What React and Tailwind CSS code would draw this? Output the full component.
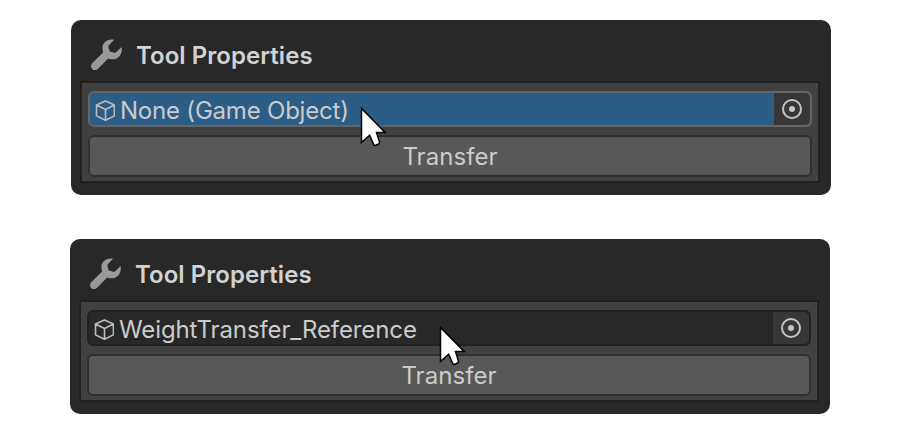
function Wrench() {
  return (
    <svg className="h-8 w-8 shrink-0" viewBox="0 0 32 32" fill="#999999">
      <path d="M23.1 .8C18.5-.8 11.6 2.2 11.4 8.6C11.4 10.5 11.8 12 12.1 13.4L1.2 24.3C-1.4 27.2.8 31.1 4 31.1C5.3 31.1 6.3 30.5 7 29.8L17.2 19.5C24.6 22.6 32.3 16.8 30.6 8L24.3 14.1L18.7 12.6L17.2 7Z" />
    </svg>
  );
}

function Cube() {
  return (
    <svg className="mt-[3px] h-[22px] w-5 shrink-0" viewBox="0 0 20 22" fill="none" stroke="#bcbcbc" strokeWidth="1.6" strokeLinejoin="round">
      <path d="M10.5 .9L19.4 5V15.9L10.5 20.2L1.5 15.9V5ZM1.5 5L10.5 9.5L19.4 5M10.5 9.5V20.2" />
    </svg>
  );
}

function Cursor() {
  return (
    <svg className="h-10 w-7" viewBox="0 0 28 40">
      <path d="M1.5 1.4L25.3 25.6H16.5L19.4 34.8Q19.7 36.2 18.7 37L15.7 38.3Q14.2 38.8 13.6 37.4L9.6 28.3L1.5 35.5Z" fill="white" stroke="#050505" strokeWidth="1.5" strokeLinejoin="miter" />
    </svg>
  );
}

function Panel({ value, active }) {
  return (
    <section className="h-[175px] w-[760px] rounded-[10px] bg-[#282828] px-[10px] text-[#d2d2d2]">
      <header className="flex h-[61px] items-center pl-[10px] pt-[9px]">
        <Wrench />
        <h2 className="ml-[13px] pt-0.5 text-[24px] leading-8 font-semibold tracking-[0.05px] whitespace-nowrap">Tool Properties</h2>
      </header>
      <div className="-ml-px flex h-[102px] w-[740px] flex-col gap-2 border-2 border-[#212121] bg-[#414141] px-[6px] pt-2">
        <div
          className={`relative flex h-9 shrink-0 items-center rounded-md border-2 pl-[5px] ${
            active ? "border-[#656565] bg-[#2c5d87]" : "border-[#212121] bg-[#282828]"
          }`}
        >
          <Cube />
          <span className={`ml-[5px] pt-[3px] text-[24px] leading-8 text-[#cbcbcb] whitespace-nowrap ${active ? "tracking-[-0.21px]" : "tracking-[-0.11px]"}`}>
            {value}
          </span>
          <span className="ml-auto flex h-8 w-9 items-center justify-center rounded-r-[5px] bg-[#373737]">
            <svg className="h-5 w-5" viewBox="0 0 20 20" fill="none">
              <circle cx="10" cy="10" r="9" stroke="#c4c4c4" strokeWidth="2" />
              <circle cx="10" cy="10" r="3" fill="#c4c4c4" />
            </svg>
          </span>
          <span className={`absolute z-10 ${active ? "left-[270px] top-[14px]" : "left-[350px] top-[14px]"}`}>
            <Cursor />
          </span>
        </div>
        <button className="h-[42px] shrink-0 rounded-md border-2 border-[#303030] bg-[#585858] pt-0.5 text-[24px] leading-8 tracking-[0.05px] text-[#cbcbcb]">
          Transfer
        </button>
      </div>
    </section>
  );
}

export default function App() {
  return (
    <main className="flex h-[434px] w-[901px] flex-col gap-11 bg-white pl-[70px] pt-5 font-['Inter','Liberation_Sans',sans-serif]">
      <div className="pl-px">
        <Panel value="None (Game Object)" active />
      </div>
      <Panel value="WeightTransfer_Reference" />
    </main>
  );
}
